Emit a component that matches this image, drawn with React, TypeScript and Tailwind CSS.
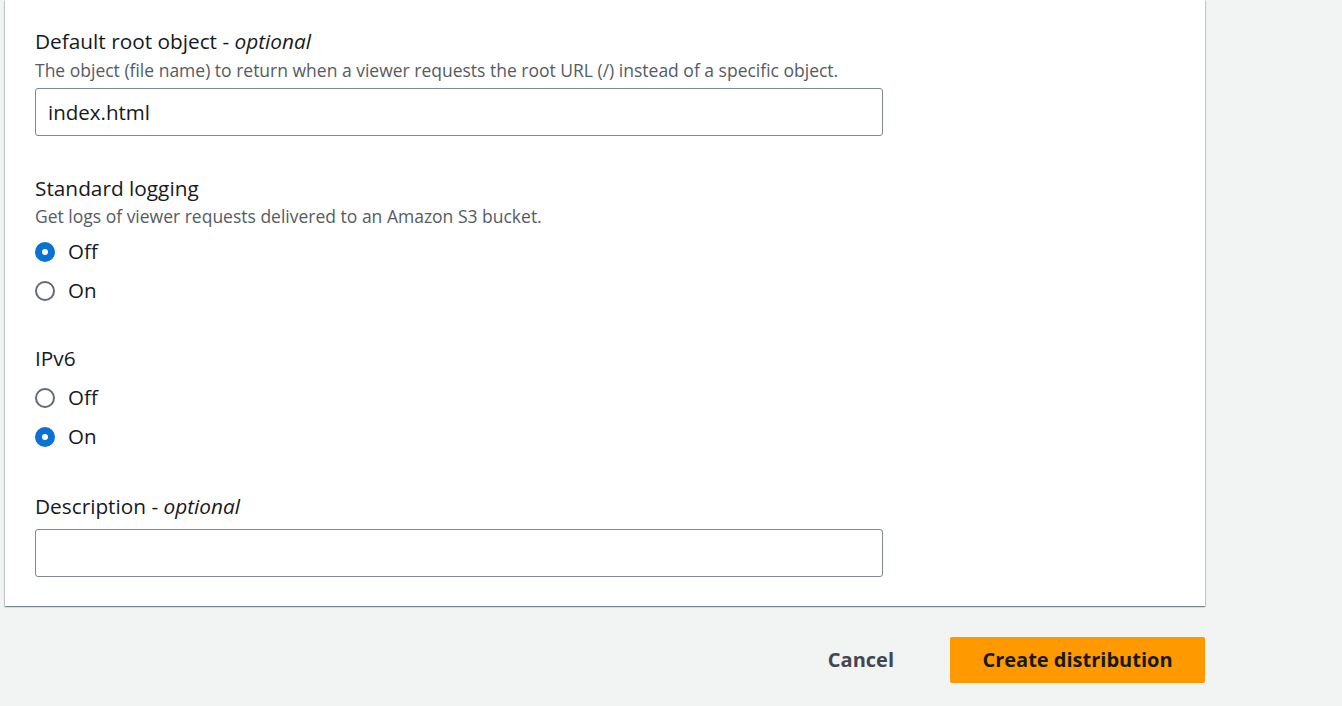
import React, { useState } from 'react';

const font = { fontFamily: '"Open Sans", "Noto Sans", Arial, sans-serif' };

const Radio: React.FC<{ checked: boolean; label: string; onClick: () => void }> = ({ checked, label, onClick }) => (
  <button type="button" onClick={onClick} className="flex items-center h-[39px] gap-[13px] text-left">
    <span
      className={`w-[20px] h-[20px] rounded-full bg-white box-border ${
        checked ? 'border-[7px] border-[#0972d3]' : 'border-2 border-[#5f6b7a]'
      }`}
    />
    <span className="text-[20.5px] text-[#16191f]">{label}</span>
  </button>
);

const App: React.FC = () => {
  const [logging, setLogging] = useState('off');
  const [ipv6, setIpv6] = useState('on');
  const [rootObject, setRootObject] = useState('index.html');
  const [description, setDescription] = useState('');

  return (
    <div className="min-h-[706px] bg-[#f2f3f3] w-full" style={font}>
      <div className="w-[1200px] ml-[5px] bg-white shadow-[0_1px_1px_0_rgba(0,28,36,0.3),1px_1px_1px_0_rgba(0,28,36,0.15),-1px_1px_1px_0_rgba(0,28,36,0.15)] px-[30px] pt-[29px] pb-[29px]">
        {/* Default root object */}
        <div className="w-[848px]">
          <label className="block text-[20.8px] leading-[24px] text-[#16191f]">
            Default root object - <i>optional</i>
          </label>
          <p className="text-[17.5px] leading-[22px] text-[#545b64] mt-[6px]">
            The object (file name) to return when a viewer requests the root URL (/) instead of a specific object.
          </p>
          <input
            value={rootObject}
            onChange={(e) => setRootObject(e.target.value)}
            className="mt-[7px] w-full h-[48px] border border-[#7d8998] rounded-[3px] px-[12px] text-[20.5px] text-[#16191f] outline-none"
            style={font}
          />
        </div>

        {/* Standard logging */}
        <div className="mt-[40px]">
          <label className="block text-[20.8px] leading-[24px] text-[#16191f]">Standard logging</label>
          <p className="text-[17.5px] leading-[22px] text-[#545b64] mt-[5px]">
            Get logs of viewer requests delivered to an Amazon S3 bucket.
          </p>
          <div className="mt-[5px] flex flex-col">
            <Radio checked={logging === 'off'} label="Off" onClick={() => setLogging('off')} />
            <Radio checked={logging === 'on'} label="On" onClick={() => setLogging('on')} />
          </div>
        </div>

        {/* IPv6 */}
        <div className="mt-[36px]">
          <label className="block text-[20.8px] leading-[24px] text-[#16191f]">IPv6</label>
          <div className="mt-[8px] flex flex-col">
            <Radio checked={ipv6 === 'off'} label="Off" onClick={() => setIpv6('off')} />
            <Radio checked={ipv6 === 'on'} label="On" onClick={() => setIpv6('on')} />
          </div>
        </div>

        {/* Description */}
        <div className="mt-[38px] w-[848px]">
          <label className="block text-[20.8px] leading-[24px] text-[#16191f]">
            Description - <i>optional</i>
          </label>
          <input
            value={description}
            onChange={(e) => setDescription(e.target.value)}
            className="mt-[11px] w-full h-[48px] border border-[#7d8998] rounded-[3px] px-[12px] text-[20.5px] text-[#16191f] outline-none"
            style={font}
          />
        </div>
      </div>

      <div className="w-[1205px] flex justify-end items-center gap-[46px] mt-[29px]">
        <button type="button" className="text-[20px] font-bold text-[#414750] px-[10px] py-[10px]">
          Cancel
        </button>
        <button
          type="button"
          className="w-[255px] h-[46px] bg-[#ff9900] rounded-[2px] text-[20px] font-bold text-[#16191f]"
        >
          Create distribution
        </button>
      </div>
    </div>
  );
};

export default App;
